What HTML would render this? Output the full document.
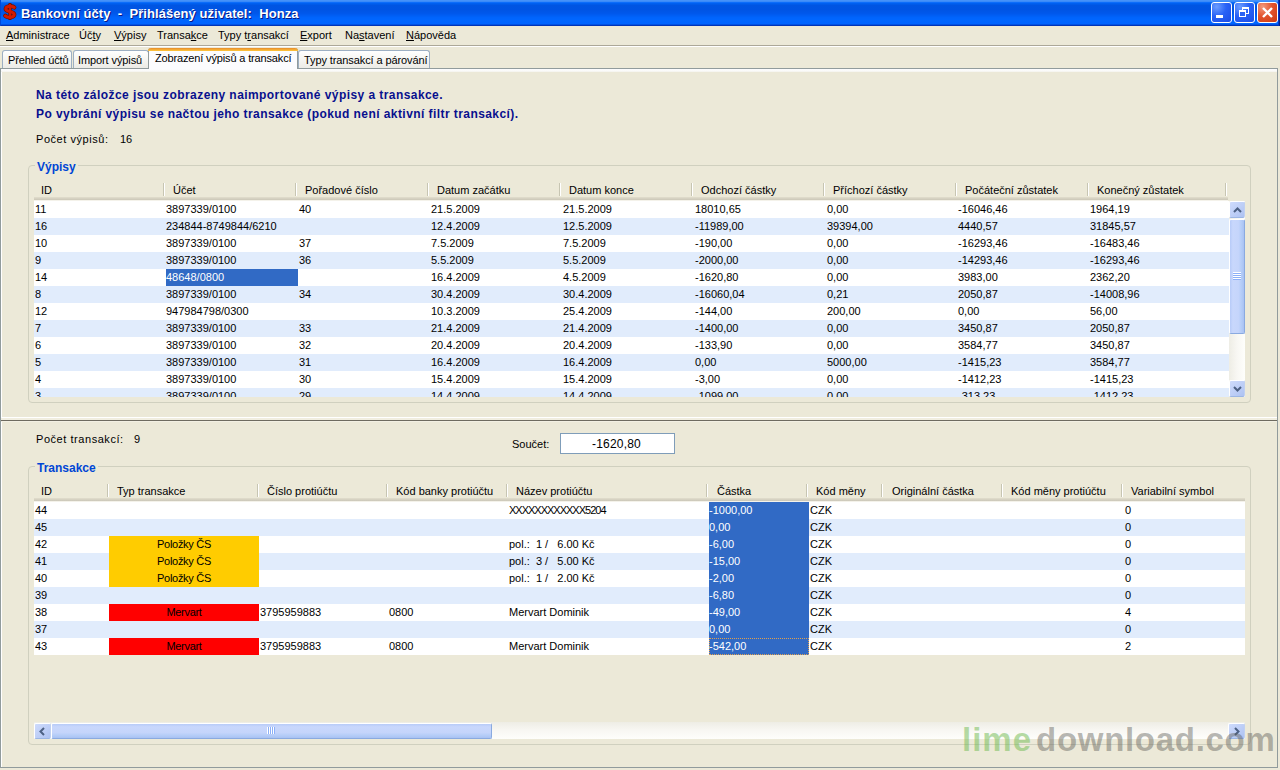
<!DOCTYPE html>
<html><head><meta charset="utf-8">
<style>
*{margin:0;padding:0;box-sizing:border-box}
html,body{width:1280px;height:770px;overflow:hidden;background:#ECE9D8;font-family:"Liberation Sans",sans-serif;font-size:11px;color:#000}
.a{position:absolute}
#title{position:absolute;left:0;top:0;width:1280px;height:26px;
 background:linear-gradient(to bottom,#4592F9 0.5px,#3A8AF8 1.5px,#0C6DFA 2.5px,#0060F0 3.5px,#0055E2 5.5px,#0054E3 9.5px,#0058EC 13.5px,#0064FC 17.5px,#0066FF 19.5px,#0064FF 23.5px,#0052E4 24.5px,#0034B8 25.5px);}
#title .t{position:absolute;left:21px;top:6px;color:#fff;font-weight:bold;font-size:13px;white-space:pre;text-shadow:1px 1px 0 #0A1883;letter-spacing:0.05px}
.tb{position:absolute;top:2px;width:21px;height:21px;border:1px solid #fff;border-radius:3px;
 background:radial-gradient(circle at 25% 20%,#6C9DFF 0,#2962F6 45%,#1B4BE5 100%)}
#menu{position:absolute;left:0;top:26px;width:1280px;height:19px;background:#ECE9D8}
.mi{position:absolute;top:3px;white-space:pre}
.mi u{text-decoration:underline}
.tab{position:absolute;top:50px;height:18px;letter-spacing:-0.1px;border:1px solid #9DAFC3;border-bottom:none;border-radius:3px 3px 0 0;
 background:linear-gradient(to bottom,#FFFFFF 0,#F7F7F4 40%,#ECEBE6 100%);white-space:pre;padding-top:3px}
#panel{position:absolute;left:0;top:68px;width:1278px;height:700px;border:1px solid #919B9C;background:#ECE9D8}
.blue{position:absolute;color:#08108E;font-weight:bold;font-size:12px;white-space:pre;letter-spacing:0.43px}
.lbl{position:absolute;white-space:pre}
.grp{position:absolute;border:1px solid #D0D0BF;border-radius:4px}
.gt{position:absolute;color:#0046D5;font-weight:bold;font-size:12px;background:#ECE9D8;padding:0 2px}
.hd{position:absolute;white-space:pre;line-height:13px}
.hsep{position:absolute;width:2px;height:13px;border-left:1px solid #C7C5B2;border-right:1px solid #fff}
.hband{position:absolute;height:3px;background:linear-gradient(to bottom,#E2DECD,#D6D2C2 50%,#CBC7B8)}
.row{position:absolute;height:17px}
.cell{position:absolute;height:17px;line-height:17px;white-space:pre}
.sel{position:absolute;height:17px;background:#316AC5}
.typ{position:absolute;left:109px;width:150px;height:17px;line-height:17px;text-align:center;letter-spacing:-0.3px}
.sb{position:absolute;background:linear-gradient(to right,#F3F1EC,#FEFEFB)}
.sbtn{position:absolute;width:16px;height:17px;border:1px solid #fff;border-bottom-color:#9CB6E4;border-right-color:#C0D0F0;border-radius:2px;background:linear-gradient(135deg,#CEDBFC,#BCCDF6 60%,#ADC2F2)}
.thumb{position:absolute;border:1px solid #fff;border-radius:2px;background:linear-gradient(to right,#C9D8FC,#B8CCF8 60%,#A8BEF4)}
</style></head><body>
<div id="title">
 <svg class="a" style="left:2px;top:3px" width="16" height="17" viewBox="0 0 17 18"><g fill="none" stroke-linecap="round"><path d="M8.5 1.5 V16.5" stroke="#6A1000" stroke-width="3.6"/><path d="M13 4.6 C11.5 3 4 2.6 4 6.3 C4 9.6 13 8.4 13 12.3 C13 15.6 5.5 15.8 3.5 13.6" stroke="#6A1000" stroke-width="4.6"/><path d="M8.5 1.8 V16.2" stroke="#D01800" stroke-width="2.2"/><path d="M13 4.6 C11.5 3 4 2.6 4 6.3 C4 9.6 13 8.4 13 12.3 C13 15.6 5.5 15.8 3.5 13.6" stroke="#D41A00" stroke-width="3.2"/></g></svg>
 <div class="a" style="left:1278px;top:0;width:1px;height:26px;background:#0038C8"></div><div class="a" style="left:1279px;top:0;width:1px;height:26px;background:#00208E"></div><div class="a" style="left:0;top:0;width:1px;height:26px;background:#0048D8"></div>
 <div class="t">Bankovní účty  -  Přihlášený uživatel:  Honza</div>
 <div class="tb" style="left:1211px"><div class="a" style="left:4px;top:12px;width:7px;height:3px;background:#fff"></div></div>
 <div class="tb" style="left:1234px"><div class="a" style="left:7px;top:4px;width:7px;height:7px;border:1px solid #fff;border-top-width:2px"></div><div class="a" style="left:4px;top:7px;width:7px;height:7px;border:1px solid #fff;border-top-width:2px;background:#2A63F4"></div></div>
 <div class="tb" style="left:1257px;background:radial-gradient(circle at 25% 20%,#F39A7D 0,#E2542E 45%,#CC3A12 100%)"><svg class="a" style="left:3px;top:3px" width="13" height="13" viewBox="0 0 13 13"><path d="M2 2 L11 11 M11 2 L2 11" stroke="#fff" stroke-width="2.4"/></svg></div>
</div>
<div id="menu">
<div class="mi" style="left:6px"><u>A</u>dministrace</div>
<div class="mi" style="left:79px">Úč<u>t</u>y</div>
<div class="mi" style="left:114px"><u>V</u>ýpisy</div>
<div class="mi" style="left:157px">Transa<u>k</u>ce</div>
<div class="mi" style="left:218px">Typy t<u>r</u>ansakcí</div>
<div class="mi" style="left:300px"><u>E</u>xport</div>
<div class="mi" style="left:345px">Na<u>s</u>tavení</div>
<div class="mi" style="left:406px"><u>N</u>ápověda</div>
</div>
<div class="a" style="left:0;top:45px;width:1280px;height:1px;background:#ACA899"></div>
<div class="a" style="left:0;top:46px;width:1280px;height:1px;background:#fff"></div>
<div id="panel"></div>
<div class="a" style="left:1px;top:69px;width:1px;height:698px;background:#fff"></div>
<div class="tab" style="left:2px;width:70px;padding-left:5px">Přehled účtů</div>
<div class="tab" style="left:73px;width:76px;padding-left:4px">Import výpisů</div>
<div class="tab" style="left:298px;width:132px;padding-left:5px">Typy transakcí a párování</div>
<div class="a" style="left:148px;top:48px;width:150px;height:22px;background:#FCFCFE;border-left:1px solid #919B9C;border-right:1px solid #919B9C;border-radius:3px 3px 0 0;white-space:pre;padding:4px 0 0 6px;letter-spacing:-0.15px"><div class="a" style="left:-1px;top:0;width:150px;height:3px;border-radius:3px 3px 0 0;background:linear-gradient(to bottom,#E68B2C,#FFC73C)"></div>Zobrazení výpisů a transakcí</div>
<div class="a" style="left:1px;top:69px;width:1276px;height:3px;background:linear-gradient(to bottom,#FCFCFE,#FAFAF8 66%,#F2F1EA)"></div>

<div class="blue" style="left:36px;top:88px">Na této záložce jsou zobrazeny naimportované výpisy a transakce.</div>
<div class="blue" style="left:36px;top:107px">Po vybrání výpisu se načtou jeho transakce (pokud není aktivní filtr transakcí).</div>
<div class="lbl" style="left:36px;top:133px;letter-spacing:0.55px">Počet výpisů:</div><div class="lbl" style="left:120px;top:133px">16</div>

<div class="grp" style="left:28px;top:165px;width:1223px;height:238px"></div>
<div class="gt" style="left:35px;top:160px">Výpisy</div>
<div class="hd" style="left:41px;top:184px">ID</div>
<div class="hd" style="left:173px;top:184px">Účet</div>
<div class="hd" style="left:305px;top:184px">Pořadové číslo</div>
<div class="hd" style="left:437px;top:184px">Datum začátku</div>
<div class="hd" style="left:569px;top:184px">Datum konce</div>
<div class="hd" style="left:701px;top:184px">Odchozí částky</div>
<div class="hd" style="left:833px;top:184px">Příchozí částky</div>
<div class="hd" style="left:965px;top:184px">Počáteční zůstatek</div>
<div class="hd" style="left:1097px;top:184px">Konečný zůstatek</div>
<div class="hsep" style="left:163px;top:183px"></div>
<div class="hsep" style="left:295px;top:183px"></div>
<div class="hsep" style="left:427px;top:183px"></div>
<div class="hsep" style="left:559px;top:183px"></div>
<div class="hsep" style="left:691px;top:183px"></div>
<div class="hsep" style="left:823px;top:183px"></div>
<div class="hsep" style="left:955px;top:183px"></div>
<div class="hsep" style="left:1087px;top:183px"></div>
<div class="hsep" style="left:1225px;top:183px"></div>
<div class="hband" style="left:34px;top:197px;width:1194px"></div><div class="a" style="left:34px;top:200px;width:1194px;height:1px;background:#F4F2EA"></div>
<div class="a" style="left:0;top:0;width:1280px;height:397px;overflow:hidden"><div class="row" style="top:201px;left:34px;width:1195px;background:#fff"></div>
<div class="cell" style="top:201px;left:35px">11</div>
<div class="cell" style="top:201px;left:166px">3897339/0100</div>
<div class="cell" style="top:201px;left:299px">40</div>
<div class="cell" style="top:201px;left:431px">21.5.2009</div>
<div class="cell" style="top:201px;left:563px">21.5.2009</div>
<div class="cell" style="top:201px;left:695px">18010,65</div>
<div class="cell" style="top:201px;left:827px">0,00</div>
<div class="cell" style="top:201px;left:958px">-16046,46</div>
<div class="cell" style="top:201px;left:1090px">1964,19</div>
<div class="row" style="top:218px;left:34px;width:1195px;background:#E1ECFC"></div>
<div class="cell" style="top:218px;left:35px">16</div>
<div class="cell" style="top:218px;left:166px">234844-8749844/6210</div>
<div class="cell" style="top:218px;left:431px">12.4.2009</div>
<div class="cell" style="top:218px;left:563px">12.5.2009</div>
<div class="cell" style="top:218px;left:695px">-11989,00</div>
<div class="cell" style="top:218px;left:827px">39394,00</div>
<div class="cell" style="top:218px;left:958px">4440,57</div>
<div class="cell" style="top:218px;left:1090px">31845,57</div>
<div class="row" style="top:235px;left:34px;width:1195px;background:#fff"></div>
<div class="cell" style="top:235px;left:35px">10</div>
<div class="cell" style="top:235px;left:166px">3897339/0100</div>
<div class="cell" style="top:235px;left:299px">37</div>
<div class="cell" style="top:235px;left:431px">7.5.2009</div>
<div class="cell" style="top:235px;left:563px">7.5.2009</div>
<div class="cell" style="top:235px;left:695px">-190,00</div>
<div class="cell" style="top:235px;left:827px">0,00</div>
<div class="cell" style="top:235px;left:958px">-16293,46</div>
<div class="cell" style="top:235px;left:1090px">-16483,46</div>
<div class="row" style="top:252px;left:34px;width:1195px;background:#E1ECFC"></div>
<div class="cell" style="top:252px;left:35px">9</div>
<div class="cell" style="top:252px;left:166px">3897339/0100</div>
<div class="cell" style="top:252px;left:299px">36</div>
<div class="cell" style="top:252px;left:431px">5.5.2009</div>
<div class="cell" style="top:252px;left:563px">5.5.2009</div>
<div class="cell" style="top:252px;left:695px">-2000,00</div>
<div class="cell" style="top:252px;left:827px">0,00</div>
<div class="cell" style="top:252px;left:958px">-14293,46</div>
<div class="cell" style="top:252px;left:1090px">-16293,46</div>
<div class="row" style="top:269px;left:34px;width:1195px;background:#fff"></div>
<div class="cell" style="top:269px;left:35px">14</div>
<div class="sel" style="top:269px;left:166px;width:132px"></div>
<div class="cell" style="top:269px;left:166px;color:#fff">48648/0800</div>
<div class="cell" style="top:269px;left:431px">16.4.2009</div>
<div class="cell" style="top:269px;left:563px">4.5.2009</div>
<div class="cell" style="top:269px;left:695px">-1620,80</div>
<div class="cell" style="top:269px;left:827px">0,00</div>
<div class="cell" style="top:269px;left:958px">3983,00</div>
<div class="cell" style="top:269px;left:1090px">2362,20</div>
<div class="row" style="top:286px;left:34px;width:1195px;background:#E1ECFC"></div>
<div class="cell" style="top:286px;left:35px">8</div>
<div class="cell" style="top:286px;left:166px">3897339/0100</div>
<div class="cell" style="top:286px;left:299px">34</div>
<div class="cell" style="top:286px;left:431px">30.4.2009</div>
<div class="cell" style="top:286px;left:563px">30.4.2009</div>
<div class="cell" style="top:286px;left:695px">-16060,04</div>
<div class="cell" style="top:286px;left:827px">0,21</div>
<div class="cell" style="top:286px;left:958px">2050,87</div>
<div class="cell" style="top:286px;left:1090px">-14008,96</div>
<div class="row" style="top:303px;left:34px;width:1195px;background:#fff"></div>
<div class="cell" style="top:303px;left:35px">12</div>
<div class="cell" style="top:303px;left:166px">947984798/0300</div>
<div class="cell" style="top:303px;left:431px">10.3.2009</div>
<div class="cell" style="top:303px;left:563px">25.4.2009</div>
<div class="cell" style="top:303px;left:695px">-144,00</div>
<div class="cell" style="top:303px;left:827px">200,00</div>
<div class="cell" style="top:303px;left:958px">0,00</div>
<div class="cell" style="top:303px;left:1090px">56,00</div>
<div class="row" style="top:320px;left:34px;width:1195px;background:#E1ECFC"></div>
<div class="cell" style="top:320px;left:35px">7</div>
<div class="cell" style="top:320px;left:166px">3897339/0100</div>
<div class="cell" style="top:320px;left:299px">33</div>
<div class="cell" style="top:320px;left:431px">21.4.2009</div>
<div class="cell" style="top:320px;left:563px">21.4.2009</div>
<div class="cell" style="top:320px;left:695px">-1400,00</div>
<div class="cell" style="top:320px;left:827px">0,00</div>
<div class="cell" style="top:320px;left:958px">3450,87</div>
<div class="cell" style="top:320px;left:1090px">2050,87</div>
<div class="row" style="top:337px;left:34px;width:1195px;background:#fff"></div>
<div class="cell" style="top:337px;left:35px">6</div>
<div class="cell" style="top:337px;left:166px">3897339/0100</div>
<div class="cell" style="top:337px;left:299px">32</div>
<div class="cell" style="top:337px;left:431px">20.4.2009</div>
<div class="cell" style="top:337px;left:563px">20.4.2009</div>
<div class="cell" style="top:337px;left:695px">-133,90</div>
<div class="cell" style="top:337px;left:827px">0,00</div>
<div class="cell" style="top:337px;left:958px">3584,77</div>
<div class="cell" style="top:337px;left:1090px">3450,87</div>
<div class="row" style="top:354px;left:34px;width:1195px;background:#E1ECFC"></div>
<div class="cell" style="top:354px;left:35px">5</div>
<div class="cell" style="top:354px;left:166px">3897339/0100</div>
<div class="cell" style="top:354px;left:299px">31</div>
<div class="cell" style="top:354px;left:431px">16.4.2009</div>
<div class="cell" style="top:354px;left:563px">16.4.2009</div>
<div class="cell" style="top:354px;left:695px">0,00</div>
<div class="cell" style="top:354px;left:827px">5000,00</div>
<div class="cell" style="top:354px;left:958px">-1415,23</div>
<div class="cell" style="top:354px;left:1090px">3584,77</div>
<div class="row" style="top:371px;left:34px;width:1195px;background:#fff"></div>
<div class="cell" style="top:371px;left:35px">4</div>
<div class="cell" style="top:371px;left:166px">3897339/0100</div>
<div class="cell" style="top:371px;left:299px">30</div>
<div class="cell" style="top:371px;left:431px">15.4.2009</div>
<div class="cell" style="top:371px;left:563px">15.4.2009</div>
<div class="cell" style="top:371px;left:695px">-3,00</div>
<div class="cell" style="top:371px;left:827px">0,00</div>
<div class="cell" style="top:371px;left:958px">-1412,23</div>
<div class="cell" style="top:371px;left:1090px">-1415,23</div>
<div class="row" style="top:388px;left:34px;width:1195px;background:#E1ECFC"></div>
<div class="cell" style="top:388px;left:35px">3</div>
<div class="cell" style="top:388px;left:166px">3897339/0100</div>
<div class="cell" style="top:388px;left:299px">29</div>
<div class="cell" style="top:388px;left:431px">14.4.2009</div>
<div class="cell" style="top:388px;left:563px">14.4.2009</div>
<div class="cell" style="top:388px;left:695px">-1099,00</div>
<div class="cell" style="top:388px;left:827px">0,00</div>
<div class="cell" style="top:388px;left:958px">-313,23</div>
<div class="cell" style="top:388px;left:1090px">-1412,23</div></div>
<div class="a" style="left:1229px;top:201px;width:16px;height:196px;background:linear-gradient(to right,#EEEDE5,#F8F7F3 50%,#FEFEFB)"></div>
<div class="sbtn" style="left:1229px;top:201px"><svg class="a" style="left:3px;top:5px" width="9" height="6"><path d="M1 5 L4.5 1.5 L8 5" stroke="#4D6185" stroke-width="2" fill="none"/></svg></div>
<div class="a" style="left:1229px;top:219px;width:16px;height:115px;border:1px solid #fff;border-right-color:#8AAAE0;border-bottom-color:#8AAAE0;border-radius:2px;background:linear-gradient(to right,#B7CBF8 0,#C8D7FC 20%,#C5D5FB 60%,#B2CBF7 85%,#A9C1F2 100%)">
 <div class="a" style="left:3px;top:52px;width:8px;height:8px;background:repeating-linear-gradient(to bottom,#fff 0 1px,#8CB0F8 1px 2px)"></div></div>
<div class="sbtn" style="left:1229px;top:380px"><svg class="a" style="left:3px;top:5px" width="9" height="6"><path d="M1 1 L4.5 4.5 L8 1" stroke="#4D6185" stroke-width="2" fill="none"/></svg></div>

<div class="a" style="left:1px;top:417px;width:1276px;height:1px;background:#fff"></div>
<div class="a" style="left:1px;top:418px;width:1276px;height:2px;background:#F1EEE0"></div>
<div class="a" style="left:1px;top:420px;width:1276px;height:1px;background:#6E6B60"></div>
<div class="a" style="left:1px;top:421px;width:1276px;height:1px;background:#F3F0E3"></div>

<div class="lbl" style="left:36px;top:433px;letter-spacing:0.55px">Počet transakcí:</div><div class="lbl" style="left:134px;top:433px">9</div>
<div class="lbl" style="left:512px;top:438px">Součet:</div>
<div class="a" style="left:560px;top:433px;width:115px;height:21px;border:1px solid #7F9DB9;background:#fff;text-align:center;line-height:21px;padding-right:2px;font-size:12px;letter-spacing:0.2px">-1620,80</div>

<div class="grp" style="left:28px;top:466px;width:1223px;height:279px"></div>
<div class="gt" style="left:35px;top:461px">Transakce</div>
<div class="hd" style="left:41px;top:485px">ID</div>
<div class="hd" style="left:117px;top:485px">Typ transakce</div>
<div class="hd" style="left:267px;top:485px">Číslo protiúčtu</div>
<div class="hd" style="left:396px;top:485px">Kód banky protiúčtu</div>
<div class="hd" style="left:516px;top:485px">Název protiúčtu</div>
<div class="hd" style="left:717px;top:485px">Částka</div>
<div class="hd" style="left:816px;top:485px">Kód měny</div>
<div class="hd" style="left:892px;top:485px">Originální částka</div>
<div class="hd" style="left:1011px;top:485px">Kód měny protiúčtu</div>
<div class="hd" style="left:1131px;top:485px">Variabilní symbol</div>
<div class="hsep" style="left:107px;top:484px"></div>
<div class="hsep" style="left:257px;top:484px"></div>
<div class="hsep" style="left:386px;top:484px"></div>
<div class="hsep" style="left:506px;top:484px"></div>
<div class="hsep" style="left:706px;top:484px"></div>
<div class="hsep" style="left:806px;top:484px"></div>
<div class="hsep" style="left:881px;top:484px"></div>
<div class="hsep" style="left:1001px;top:484px"></div>
<div class="hsep" style="left:1121px;top:484px"></div>
<div class="hband" style="left:34px;top:498px;width:1211px"></div><div class="a" style="left:34px;top:501px;width:1211px;height:1px;background:#F4F2EA"></div>
<div class="row" style="top:502px;left:34px;width:1211px;background:#fff"></div>
<div class="cell" style="top:502px;left:35px">44</div>
<div class="cell" style="top:502px;left:509px;letter-spacing:-1px">XXXXXXXXXXXX5204</div>
<div class="sel" style="top:502px;left:709px;width:100px"></div>
<div class="cell" style="top:502px;left:709px;color:#fff">-1000,00</div>
<div class="cell" style="top:502px;left:810px">CZK</div>
<div class="cell" style="top:502px;left:1125px">0</div>
<div class="row" style="top:519px;left:34px;width:1211px;background:#E1ECFC"></div>
<div class="cell" style="top:519px;left:35px">45</div>
<div class="sel" style="top:519px;left:709px;width:100px"></div>
<div class="cell" style="top:519px;left:709px;color:#fff">0,00</div>
<div class="cell" style="top:519px;left:810px">CZK</div>
<div class="cell" style="top:519px;left:1125px">0</div>
<div class="row" style="top:536px;left:34px;width:1211px;background:#fff"></div>
<div class="cell" style="top:536px;left:35px">42</div>
<div class="typ" style="top:536px;background:#FFCC00">Položky ČS</div>
<div class="cell" style="top:536px;left:509px">pol.:  1 /   6.00 Kč</div>
<div class="sel" style="top:536px;left:709px;width:100px"></div>
<div class="cell" style="top:536px;left:709px;color:#fff">-6,00</div>
<div class="cell" style="top:536px;left:810px">CZK</div>
<div class="cell" style="top:536px;left:1125px">0</div>
<div class="row" style="top:553px;left:34px;width:1211px;background:#E1ECFC"></div>
<div class="cell" style="top:553px;left:35px">41</div>
<div class="typ" style="top:553px;background:#FFCC00">Položky ČS</div>
<div class="cell" style="top:553px;left:509px">pol.:  3 /   5.00 Kč</div>
<div class="sel" style="top:553px;left:709px;width:100px"></div>
<div class="cell" style="top:553px;left:709px;color:#fff">-15,00</div>
<div class="cell" style="top:553px;left:810px">CZK</div>
<div class="cell" style="top:553px;left:1125px">0</div>
<div class="row" style="top:570px;left:34px;width:1211px;background:#fff"></div>
<div class="cell" style="top:570px;left:35px">40</div>
<div class="typ" style="top:570px;background:#FFCC00">Položky ČS</div>
<div class="cell" style="top:570px;left:509px">pol.:  1 /   2.00 Kč</div>
<div class="sel" style="top:570px;left:709px;width:100px"></div>
<div class="cell" style="top:570px;left:709px;color:#fff">-2,00</div>
<div class="cell" style="top:570px;left:810px">CZK</div>
<div class="cell" style="top:570px;left:1125px">0</div>
<div class="row" style="top:587px;left:34px;width:1211px;background:#E1ECFC"></div>
<div class="cell" style="top:587px;left:35px">39</div>
<div class="sel" style="top:587px;left:709px;width:100px"></div>
<div class="cell" style="top:587px;left:709px;color:#fff">-6,80</div>
<div class="cell" style="top:587px;left:810px">CZK</div>
<div class="cell" style="top:587px;left:1125px">0</div>
<div class="row" style="top:604px;left:34px;width:1211px;background:#fff"></div>
<div class="cell" style="top:604px;left:35px">38</div>
<div class="typ" style="top:604px;background:#FF0000">Mervart</div>
<div class="cell" style="top:604px;left:260px">3795959883</div>
<div class="cell" style="top:604px;left:389px">0800</div>
<div class="cell" style="top:604px;left:509px">Mervart Dominik</div>
<div class="sel" style="top:604px;left:709px;width:100px"></div>
<div class="cell" style="top:604px;left:709px;color:#fff">-49,00</div>
<div class="cell" style="top:604px;left:810px">CZK</div>
<div class="cell" style="top:604px;left:1125px">4</div>
<div class="row" style="top:621px;left:34px;width:1211px;background:#E1ECFC"></div>
<div class="cell" style="top:621px;left:35px">37</div>
<div class="sel" style="top:621px;left:709px;width:100px"></div>
<div class="cell" style="top:621px;left:709px;color:#fff">0,00</div>
<div class="cell" style="top:621px;left:810px">CZK</div>
<div class="cell" style="top:621px;left:1125px">0</div>
<div class="row" style="top:638px;left:34px;width:1211px;background:#fff"></div>
<div class="cell" style="top:638px;left:35px">43</div>
<div class="typ" style="top:638px;background:#FF0000">Mervart</div>
<div class="cell" style="top:638px;left:260px">3795959883</div>
<div class="cell" style="top:638px;left:389px">0800</div>
<div class="cell" style="top:638px;left:509px">Mervart Dominik</div>
<div class="sel" style="top:638px;left:709px;width:100px;outline:1px dotted #E0A050;outline-offset:-1px"></div>
<div class="cell" style="top:638px;left:709px;color:#fff">-542,00</div>
<div class="cell" style="top:638px;left:810px">CZK</div>
<div class="cell" style="top:638px;left:1125px">2</div>

<div class="a" style="left:34px;top:722px;width:1211px;height:17px;background:linear-gradient(to bottom,#EEEDE5,#F8F7F3 50%,#FEFEFB)"></div>
<div class="sbtn" style="left:34px;top:723px;width:17px;height:16px"><svg class="a" style="left:4px;top:3px" width="6" height="9"><path d="M5 1 L1.5 4.5 L5 8" stroke="#4D6185" stroke-width="2" fill="none"/></svg></div>
<div class="a" style="left:51px;top:723px;width:441px;height:16px;border:1px solid #fff;border-right-color:#8AAAE0;border-bottom-color:#8AAAE0;border-radius:2px;background:linear-gradient(to bottom,#B7CBF8 0,#C8D7FC 20%,#C5D5FB 60%,#B2CBF7 85%,#A9C1F2 100%)">
 <div class="a" style="left:215px;top:3px;width:8px;height:7px;background:repeating-linear-gradient(to right,#fff 0 1px,#8CB0F8 1px 2px)"></div></div>
<div class="sbtn" style="left:1228px;top:723px;width:17px;height:16px"><svg class="a" style="left:5px;top:3px" width="6" height="9"><path d="M1 1 L4.5 4.5 L1 8" stroke="#4D6185" stroke-width="2" fill="none"/></svg></div>

<div class="a" style="left:962px;top:720px;font-size:33px;font-weight:bold;letter-spacing:1.0px;white-space:pre;line-height:40px"><span style="color:rgba(110,185,80,0.5)">lime</span><span style="color:rgba(95,95,90,0.45);margin-left:4px;letter-spacing:0.7px">download.com</span></div>
</body></html>
